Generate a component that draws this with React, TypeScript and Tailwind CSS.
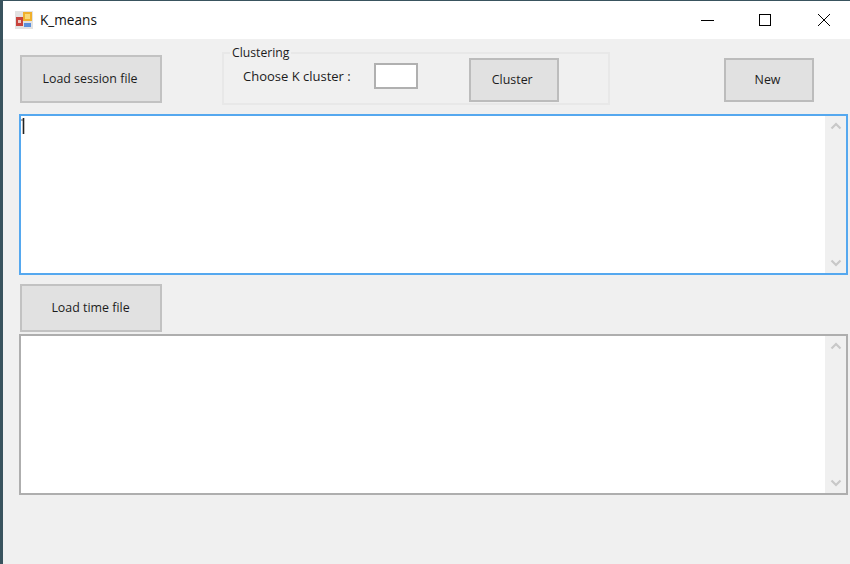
import { type FC, type ReactNode } from 'react';

const Chevron: FC<{ up?: boolean }> = ({ up }) => (
  <svg width="12" height="8" viewBox="0 0 12 8" fill="none" className="block">
    <path
      d={up ? 'M1.5 6.5 L6 2 L10.5 6.5' : 'M1.5 1.5 L6 6 L10.5 1.5'}
      stroke="#c8c8c8"
      strokeWidth="2.2"
    />
  </svg>
);

const WinButton: FC<{ className: string; children: ReactNode }> = ({ className, children }) => (
  <button
    className={`flex shrink-0 items-center justify-center border-2 bg-[#e1e1e1] text-[12.4px] text-[#1c1c1c] ${className}`}
  >
    {children}
  </button>
);

const TextBox: FC<{ focused?: boolean; className?: string }> = ({ focused, className }) => (
  <div
    className={`flex h-[161px] w-[829px] justify-between border-2 bg-white ${
      focused ? 'border-[#55a8ef]' : 'border-[#aeaeae]'
    } ${className ?? ''}`}
  >
    <div className="pt-[2px]">
      {focused && (
        <svg width="4" height="16" viewBox="0 0 4 16" className="block">
          <path d="M2.5 0 V16" stroke="#222222" strokeWidth="1.6" />
          <path d="M0 2 H2" stroke="#555555" strokeWidth="1" />
        </svg>
      )}
    </div>
    <div className="flex w-[21px] flex-col items-center justify-between bg-[#f0f0f0] py-[6px]">
      <Chevron up />
      <Chevron />
    </div>
  </div>
);

const TitleBar: FC = () => (
  <div className="flex h-[38px] shrink-0 items-center justify-between bg-white">
    <div className="flex items-center pl-[12px]">
      <svg width="18" height="18" viewBox="0 0 18 18">
        <rect width="18" height="18" fill="#e2e2e2" />
        <rect x="1" y="6" width="7" height="9" fill="#c8423c" />
        <rect x="3" y="9" width="3" height="3" fill="#eec8c0" />
        <rect x="8" y="1" width="9" height="9" fill="#f0b02c" />
        <rect x="10" y="3" width="5" height="5" fill="#f8d878" />
        <rect x="9" y="12" width="7" height="4" fill="#5a8fdc" />
      </svg>
      <span className="ml-[7px] text-[13.6px] text-[#111111]">K_means</span>
    </div>
    <div className="flex items-center pr-[19px]">
      <div className="h-px w-[13px] bg-black" />
      <div className="ml-[45px] size-[12px] border border-black" />
      <svg width="14" height="14" viewBox="0 0 14 14" fill="none" className="ml-[46px]">
        <path d="M1 1 L13 13 M13 1 L1 13" stroke="#000000" strokeWidth="1" />
      </svg>
    </div>
  </div>
);

const App: FC = () => {
  return (
    <div
      className="flex h-[564px] w-[850px] flex-col overflow-hidden border-l-[3px] border-t border-[#39535e] bg-[#f0f0f0]"
      style={{ fontFamily: '"Open Sans", "Noto Sans", sans-serif' }}
    >
      <TitleBar />
      <div className="flex h-[75px] shrink-0 items-start pl-[17px]">
        <WinButton className="mt-[16px] h-[48px] w-[142px] border-[#c2c2c2] pr-[2px]">Load session file</WinButton>
        <fieldset className="ml-[60px] mt-[6px] h-[60px] w-[388px] border-2 border-[#e8e8e8] pl-[6px]">
          <legend className="px-[2px] text-[12.2px] leading-[15px] text-[#1c1c1c]">Clustering</legend>
          <div className="flex items-start pl-[13px]">
            <span className="mt-[7px] text-[13px] leading-[18px] text-[#1c1c1c]">Choose K cluster :</span>
            <div className="ml-[23px] mt-[3px] h-[26px] w-[44px] border-2 border-[#b0b0b0] bg-white" />
            <WinButton className="ml-[51px] mt-[-2px] h-[44px] w-[90px] border-[#bcbcbc] pr-[3px] pt-[1px]">Cluster</WinButton>
          </div>
        </fieldset>
        <WinButton className="ml-[114px] mt-[19px] h-[44px] w-[90px] border-[#bcbcbc] pr-[3px]">New</WinButton>
      </div>
      <TextBox focused className="ml-[16px]" />
      <WinButton className="ml-[17px] mt-[9px] h-[48px] w-[142px] border-[#c2c2c2] pr-[1px]">Load time file</WinButton>
      <TextBox className="ml-[16px] mt-[2px]" />
    </div>
  );
};

export default App;
